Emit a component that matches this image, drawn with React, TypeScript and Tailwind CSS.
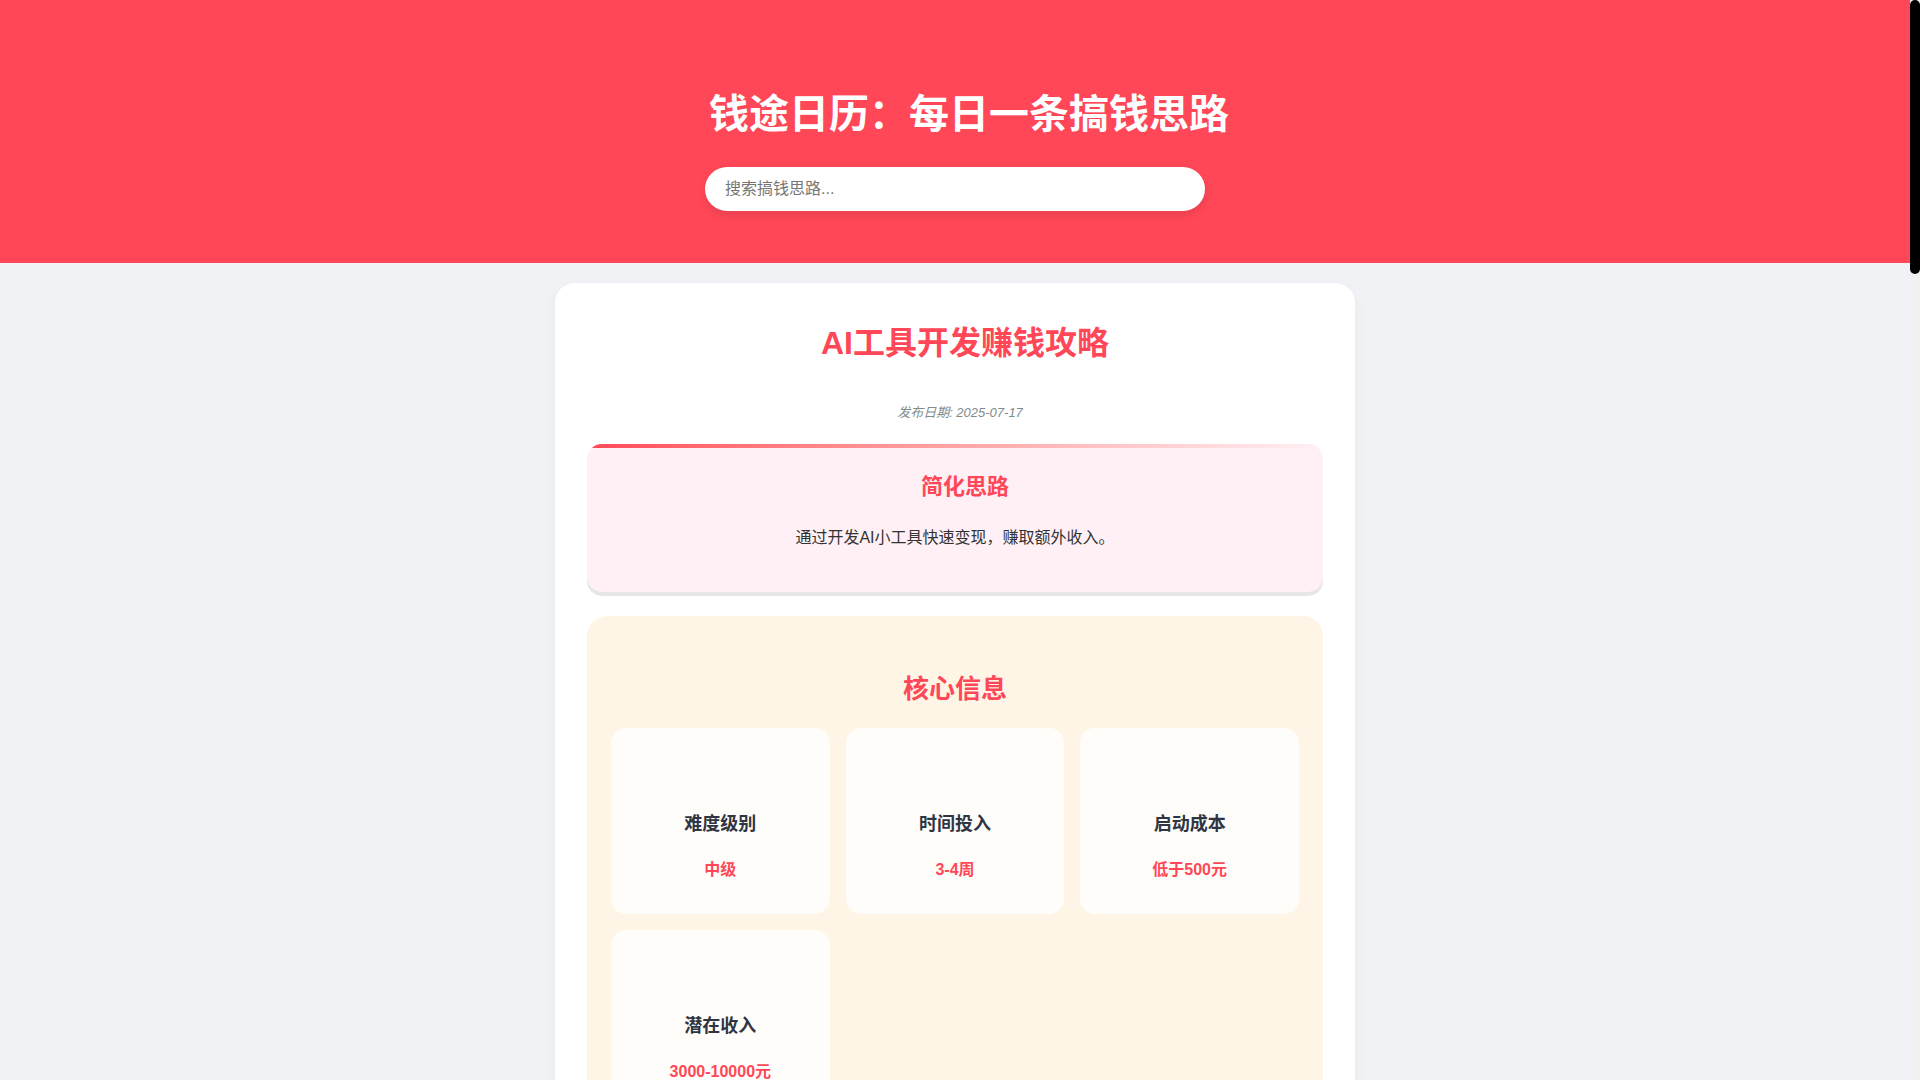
import React from "react";

type Info = { label: string; value: string };

const infos: Info[] = [
  { label: "难度级别", value: "中级" },
  { label: "时间投入", value: "3-4周" },
  { label: "启动成本", value: "低于500元" },
  { label: "潜在收入", value: "3000-10000元" },
];

const steps = [
  "确定目标用户和痛点需求",
  "选择合适的AI模型和开发框架",
  "快速开发最小可用版本",
  "在社交平台和社区推广",
  "根据用户反馈迭代优化",
];

const skills = ["Python", "提示词工程", "前端开发", "API调用", "产品设计", "内容营销"];

const tips = [
  "注意数据隐私与合规要求",
  "控制API调用成本，避免亏损",
  "保持产品简单易用",
  "持续关注AI行业最新动态",
];

const Section: React.FC<{ title: string; children: React.ReactNode }> = ({ title, children }) => (
  <section className="mt-6 rounded-[20px] bg-[#fef5e7] px-6 pt-[54px] pb-8">
    <h2 className="text-center text-[26px] leading-[39px] font-bold text-[#ff4757]">{title}</h2>
    <div className="mt-[19px]">{children}</div>
  </section>
);

const App: React.FC = () => {
  return (
    <div className="min-h-screen bg-[#f1f2f6] pr-[10px] font-['Liberation_Sans','Noto_Sans_CJK_SC',sans-serif] text-[#2f3542]">
      {/* page scrollbar */}
      <div className="fixed top-0 right-0 z-10 h-screen w-[10px] bg-[#f1f1f1]">
        <div className="h-[274px] w-full rounded-[5px] bg-black" />
      </div>

      {/* Header */}
      <header className="bg-[#ff4757] px-4 pt-[90px] pb-[52px] text-center text-white">
        <h1 className="pl-[28px] text-[40px] leading-[48px] font-bold">钱途日历：每日一条搞钱思路</h1>
        <div className="mx-auto mt-[29px] w-[500px]">
          <input
            type="text"
            placeholder="搜索搞钱思路..."
            className="h-[44px] w-full rounded-full bg-white px-5 text-base text-[#2f3542] shadow-[0_4px_10px_rgba(0,0,0,0.1)] outline-none placeholder:text-[#757575]"
          />
        </div>
      </header>

      {/* Main card */}
      <main className="mx-auto mt-5 mb-10 w-[800px] rounded-[20px] bg-white px-8 pt-[41px] pb-8 shadow-[0_5px_15px_rgba(0,0,0,0.04)]">
        <h1 className="pl-[20px] text-center text-[32px] leading-[38px] font-bold text-[#ff4757]">AI工具开发赚钱攻略</h1>
        <p className="mt-[41px] pl-[10px] text-center text-[13px] leading-[20px] text-[#7f8c8d] italic">发布日期: 2025-07-17</p>

        {/* Simplified idea */}
        <section className="relative mt-[21px] overflow-hidden rounded-[15px] bg-[#fff0f5] pt-[26px] pb-[41px] text-center shadow-[0_4px_0_#e6e6e6]">
          <div className="absolute top-0 right-0 left-0 h-1 bg-gradient-to-r from-[#ff4757] to-[#fff0f5]" />
          <h2 className="pl-[20px] text-[22px] leading-[33px] font-bold text-[#ff4757]">简化思路</h2>
          <p className="mt-[22px] text-base leading-[26px] text-[#333]">通过开发AI小工具快速变现，赚取额外收入。</p>
        </section>

        {/* Core info */}
        <Section title="核心信息">
          <div className="grid grid-cols-3 gap-4">
            {infos.map((it) => (
              <div key={it.label} className="h-[186px] rounded-[15px] bg-[#fffdf9] px-4 pt-[83px] text-center">
                <h3 className="text-[18px] leading-[27px] font-bold text-[#2f3542]">{it.label}</h3>
                <p className="mt-[20px] text-base leading-[24px] font-bold text-[#ff4757]">{it.value}</p>
              </div>
            ))}
          </div>
        </Section>

        <Section title="实施步骤">
          <div className="flex flex-col gap-4">
            {steps.map((s, i) => (
              <div key={s} className="flex items-center gap-4 rounded-[15px] bg-[#fffdf9] px-6 py-6">
                <span className="flex h-10 w-10 items-center justify-center rounded-full bg-[#ff4757] font-bold text-white">{i + 1}</span>
                <span className="text-base">{s}</span>
              </div>
            ))}
          </div>
        </Section>

        <Section title="所需技能">
          <div className="flex flex-wrap justify-center gap-3 pb-8">
            {skills.map((s) => (
              <span key={s} className="rounded-full bg-white px-5 py-2 text-[15px] text-[#ff4757]">{s}</span>
            ))}
          </div>
        </Section>

        <Section title="注意事项">
          <ul className="flex flex-col gap-4 pb-4">
            {tips.map((t) => (
              <li key={t} className="rounded-[15px] bg-[#fffdf9] px-6 py-5 text-base">{t}</li>
            ))}
          </ul>
        </Section>
      </main>

      <footer className="pb-10 text-center text-sm text-[#7f8c8d]">© 2025 钱途日历</footer>
    </div>
  );
};

export default App;
